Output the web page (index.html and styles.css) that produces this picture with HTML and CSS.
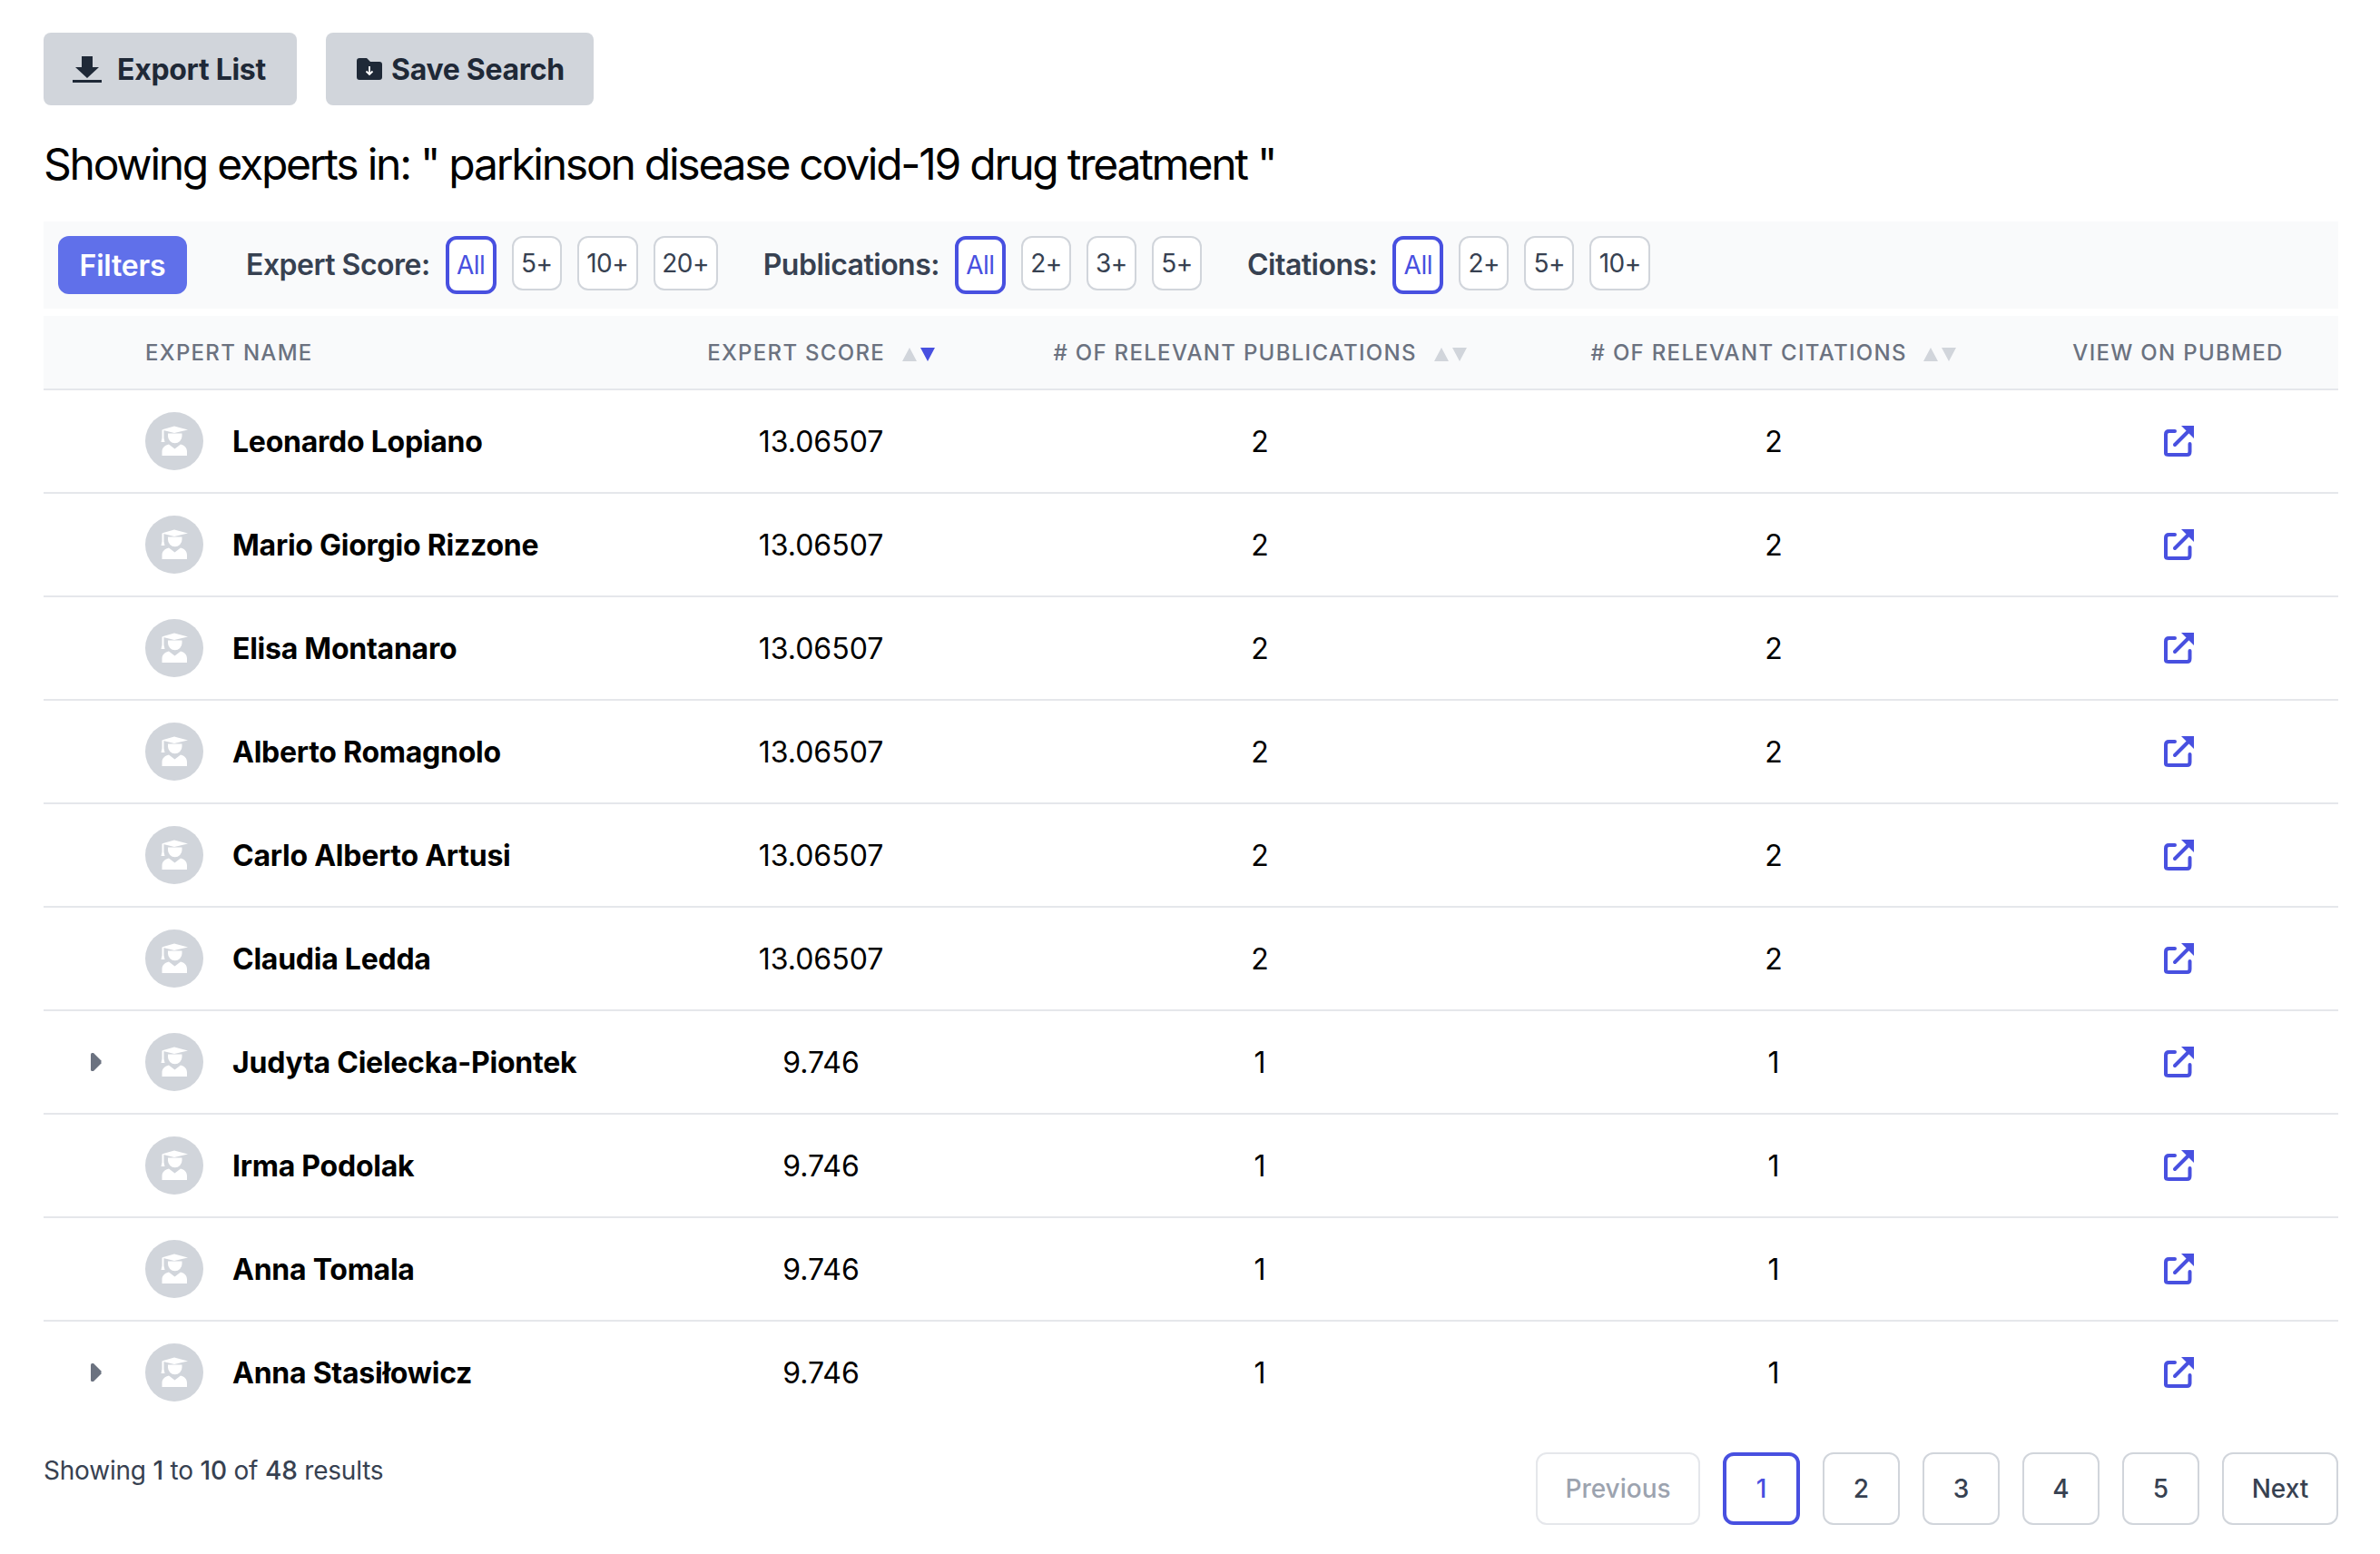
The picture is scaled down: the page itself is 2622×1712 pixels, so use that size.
FILE: index.html
```html
<!DOCTYPE html>
<html lang="en">
<head>
  <meta charset="UTF-8" />
  <title>Experts</title>
  <link rel="stylesheet" href="styles.css">
</head>
<body>
  <svg class="defs" width="0" height="0">
    <symbol id="grad" viewBox="0 0 64 64">
      <path d="M18 19.500 32 15.500l15 4-15 3.500z" fill="#fff"/>
      <path d="M18.500 20h2v8.500l1 4.500h-4l1-4.500z" fill="#fff"/>
      <path d="M25 23.500h15.500v3a7.750 7.750 0 0 1-15.500 0z" fill="#fff"/>
      <path d="M18.500 48v-4.500c0-4.500 3.500-7 7.500-8l6.500 5 6.500-5c4 1 7 3.500 7 8V48z" fill="#fff"/>
    </symbol>
    <symbol id="link" viewBox="0 0 34 34">
      <path d="M13 6H6.500Q3 6 3 9.500v21Q3 32 6.500 32h20q3 0 3-3.500V20" fill="none" stroke="#4850e0" stroke-width="4" stroke-linecap="round"/>
      <path d="M13 21 27 7" fill="none" stroke="#4850e0" stroke-width="4" stroke-linecap="round"/>
      <path d="M20 0h14v14z" fill="#4850e0"/>
    </symbol>
    <symbol id="up" viewBox="0 0 16 15"><path d="M8 0 16 15H0z"/></symbol>
    <symbol id="down" viewBox="0 0 16 15"><path d="M8 15 0 0h16z"/></symbol>
    <symbol id="caret" viewBox="0 0 12 20"><path d="M1.500 0H3l8.500 8.500v3L3 20H1.500Q0 20 0 18.500v-17Q0 0 1.500 0z" fill="#6b7280"/></symbol>
  </svg>

  <main class="page">
    <div class="actions">
      <button class="action-btn export-btn">
        <svg width="32" height="29" viewBox="0 0 32 29"><path d="M10 0h12v12h7L16 24 3 12h7z" fill="#1f2937"/><rect y="26" width="32" height="3" fill="#1f2937"/></svg>
        Export List
      </button>
      <button class="action-btn save-btn">
        <svg width="28" height="24" viewBox="0 0 28 24"><path d="M3 0h8l4 4h10q3 0 3 3v14q0 3-3 3H3q-3 0-3-3V3q0-3 3-3z" fill="#1f2937"/><path d="M14 9v9M10.500 14.500 14 18l3.500-3.500" fill="none" stroke="#fff" stroke-width="1.800"/></svg>
        Save Search
      </button>
    </div>

    <h1 class="title">Showing experts in: " parkinson disease covid-19 drug treatment "</h1>

    <div class="filters">
      <button class="filters-btn">Filters</button>
      <div class="filter-group first">
        <span class="filter-label">Expert Score:</span>
        <button class="chip active">All</button>
        <button class="chip">5+</button>
        <button class="chip ten">10+</button>
        <button class="chip twenty">20+</button>
      </div>
      <div class="filter-group">
        <span class="filter-label">Publications:</span>
        <button class="chip active">All</button>
        <button class="chip">2+</button>
        <button class="chip">3+</button>
        <button class="chip">5+</button>
      </div>
      <div class="filter-group">
        <span class="filter-label">Citations:</span>
        <button class="chip active">All</button>
        <button class="chip">2+</button>
        <button class="chip">5+</button>
        <button class="chip ten">10+</button>
      </div>
    </div>

    <table class="experts">
      <colgroup>
        <col class="col-toggle"><col class="col-name"><col class="col-score"><col class="col-pubs"><col class="col-cites"><col class="col-link">
      </colgroup>
      <thead>
        <tr>
          <th></th>
          <th class="left">Expert Name</th>
          <th>Expert Score <span class="sort"><svg class="off"><use href="#up"/></svg><svg class="on"><use href="#down"/></svg></span></th>
          <th># of Relevant Publications <span class="sort"><svg class="off"><use href="#up"/></svg><svg class="off"><use href="#down"/></svg></span></th>
          <th># of Relevant Citations <span class="sort"><svg class="off"><use href="#up"/></svg><svg class="off"><use href="#down"/></svg></span></th>
          <th>View on PubMed</th>
        </tr>
      </thead>
      <tbody>
        <tr>
          <td></td>
          <td><div class="person"><span class="avatar"><svg><use href="#grad"/></svg></span>Leonardo Lopiano</div></td>
          <td>13.06507</td><td>2</td><td>2</td>
          <td><svg class="ext"><use href="#link"/></svg></td>
        </tr>
        <tr>
          <td></td>
          <td><div class="person"><span class="avatar"><svg><use href="#grad"/></svg></span>Mario Giorgio Rizzone</div></td>
          <td>13.06507</td><td>2</td><td>2</td>
          <td><svg class="ext"><use href="#link"/></svg></td>
        </tr>
        <tr>
          <td></td>
          <td><div class="person"><span class="avatar"><svg><use href="#grad"/></svg></span>Elisa Montanaro</div></td>
          <td>13.06507</td><td>2</td><td>2</td>
          <td><svg class="ext"><use href="#link"/></svg></td>
        </tr>
        <tr>
          <td></td>
          <td><div class="person"><span class="avatar"><svg><use href="#grad"/></svg></span>Alberto Romagnolo</div></td>
          <td>13.06507</td><td>2</td><td>2</td>
          <td><svg class="ext"><use href="#link"/></svg></td>
        </tr>
        <tr>
          <td></td>
          <td><div class="person"><span class="avatar"><svg><use href="#grad"/></svg></span>Carlo Alberto Artusi</div></td>
          <td>13.06507</td><td>2</td><td>2</td>
          <td><svg class="ext"><use href="#link"/></svg></td>
        </tr>
        <tr>
          <td></td>
          <td><div class="person"><span class="avatar"><svg><use href="#grad"/></svg></span>Claudia Ledda</div></td>
          <td>13.06507</td><td>2</td><td>2</td>
          <td><svg class="ext"><use href="#link"/></svg></td>
        </tr>
        <tr>
          <td class="toggle"><svg class="caret"><use href="#caret"/></svg></td>
          <td><div class="person"><span class="avatar"><svg><use href="#grad"/></svg></span>Judyta Cielecka-Piontek</div></td>
          <td>9.746</td><td>1</td><td>1</td>
          <td><svg class="ext"><use href="#link"/></svg></td>
        </tr>
        <tr>
          <td></td>
          <td><div class="person"><span class="avatar"><svg><use href="#grad"/></svg></span>Irma Podolak</div></td>
          <td>9.746</td><td>1</td><td>1</td>
          <td><svg class="ext"><use href="#link"/></svg></td>
        </tr>
        <tr>
          <td></td>
          <td><div class="person"><span class="avatar"><svg><use href="#grad"/></svg></span>Anna Tomala</div></td>
          <td>9.746</td><td>1</td><td>1</td>
          <td><svg class="ext"><use href="#link"/></svg></td>
        </tr>
        <tr>
          <td class="toggle"><svg class="caret"><use href="#caret"/></svg></td>
          <td><div class="person"><span class="avatar"><svg><use href="#grad"/></svg></span>Anna Stasiłowicz</div></td>
          <td>9.746</td><td>1</td><td>1</td>
          <td><svg class="ext"><use href="#link"/></svg></td>
        </tr>
      </tbody>
    </table>

    <div class="footer">
      <p class="summary">Showing <b>1</b> to <b>10</b> of <b>48</b> results</p>
      <nav class="pager">
        <button class="page-btn prev">Previous</button>
        <button class="page-btn num current">1</button>
        <button class="page-btn num">2</button>
        <button class="page-btn num">3</button>
        <button class="page-btn num">4</button>
        <button class="page-btn num">5</button>
        <button class="page-btn next">Next</button>
      </nav>
    </div>
  </main>
</body>
</html>
```

FILE: styles.css
```css
* {
  box-sizing: border-box;
}
body {
  margin: 0;
  background: #fff;
  font-family: Inter, "Liberation Sans", sans-serif;
  color: #000;
}
button {
  font-family: inherit;
  cursor: pointer;
}
.defs {
  position: absolute;
}
.page {
  width: 2622px;
  padding: 36px 46px 0 48px;
}

.actions {
  display: flex;
  gap: 32px;
}
.action-btn {
  display: flex;
  align-items: center;
  height: 80px;
  border: none;
  border-radius: 8px;
  background: #d1d5db;
  color: #1f2937;
  font-size: 32px;
  font-weight: 700;
  letter-spacing: -0.3px;
  white-space: nowrap;
}
.export-btn {
  width: 279px;
  padding: 0 0 0 32px;
  gap: 17px;
}
.save-btn {
  width: 295px;
  padding: 0 0 0 34px;
  gap: 10px;
}

.title {
  margin: 33px 0 31px;
  font-size: 48px;
  font-weight: 400;
  line-height: 64px;
  letter-spacing: -2.25px;
}

.filters {
  display: flex;
  align-items: flex-start;
  height: 96px;
  padding: 16px;
  background: #f9fafb;
}
.filters-btn {
  height: 64px;
  width: 142px;
  padding: 0;
  border: none;
  border-radius: 12px;
  background: #6070ea;
  color: #fff;
  font-size: 32px;
  font-weight: 600;
  letter-spacing: -0.2px;
}
.filter-group {
  display: flex;
  align-items: flex-start;
  gap: 17px;
  margin-left: 50px;
}
.filter-group.first {
  margin-left: 65px;
}
.filter-label {
  font-size: 32px;
  font-weight: 600;
  line-height: 64px;
  letter-spacing: -0.5px;
  color: #374151;
}
.chip {
  width: 55px;
  height: 60px;
  padding: 0;
  border: 2px solid #d1d5db;
  border-radius: 12px;
  background: #fff;
  color: #374151;
  font-size: 28px;
  line-height: 32px;
  letter-spacing: -0.5px;
}
.chip.ten {
  width: 67px;
}
.chip.twenty {
  width: 71px;
}
.chip.active {
  width: 56px;
  height: 64px;
  border: 4px solid #4850e0;
  color: #4850e0;
}

.experts {
  width: 2528px;
  margin-top: 8px;
  table-layout: fixed;
  border-collapse: separate;
  border-spacing: 0;
}
.col-toggle { width: 112px; }
.col-name { width: 555px; }
.col-score { width: 379px; }
.col-pubs { width: 588px; }
.col-cites { width: 544px; }
.col-link { width: 350px; }

.experts th {
  height: 82px;
  padding: 0;
  border-bottom: 2px solid #e5e7eb;
  background: #f9fafb;
  color: #6b7280;
  font-size: 24px;
  font-weight: 500;
  letter-spacing: 1.3px;
  text-transform: uppercase;
  text-align: center;
  white-space: nowrap;
}
.experts th.left {
  text-align: left;
}
.experts th:last-child,
.experts td:last-child {
  padding-right: 3px;
}
.sort {
  display: inline-flex;
  gap: 4px;
  margin-left: 11px;
  vertical-align: -1px;
}
.sort svg {
  width: 16px;
  height: 15px;
}
.sort .off { fill: #d1d5db; }
.sort .on { fill: #4850e0; }

.experts td {
  height: 114px;
  padding: 0;
  border-bottom: 2px solid #e5e7eb;
  font-size: 32px;
  text-align: center;
}
.experts tbody tr:last-child td {
  height: 112px;
  border-bottom: none;
}
.experts td.toggle {
  padding-left: 52px;
  text-align: left;
}
.caret {
  display: block;
  width: 12px;
  height: 20px;
}
.person {
  display: flex;
  align-items: center;
  gap: 32px;
  font-weight: 700;
  letter-spacing: -0.25px;
}
.avatar {
  width: 64px;
  height: 64px;
  border-radius: 50%;
  background: #d1d5db;
}
.avatar svg {
  display: block;
  width: 64px;
  height: 64px;
}
.ext {
  display: block;
  width: 34px;
  height: 34px;
  margin: 0 auto;
}

.footer {
  display: flex;
  justify-content: space-between;
  align-items: flex-start;
  margin-top: 32px;
}
.summary {
  margin: 0;
  font-size: 28px;
  line-height: 40px;
  letter-spacing: -0.2px;
  color: #374151;
}
.summary b {
  font-weight: 500;
}
.pager {
  display: flex;
  gap: 25px;
}
.page-btn {
  height: 80px;
  padding: 0;
  border: 2px solid #d1d5db;
  border-radius: 12px;
  background: #fff;
  color: #374151;
  font-size: 28px;
  font-weight: 500;
}
.page-btn.num {
  width: 85px;
}
.page-btn.prev {
  width: 181px;
  border-color: #e5e7eb;
  color: #9ca3af;
}
.page-btn.next {
  width: 128px;
}
.page-btn.current {
  border: 4px solid #4850e0;
  color: #4850e0;
}
```
